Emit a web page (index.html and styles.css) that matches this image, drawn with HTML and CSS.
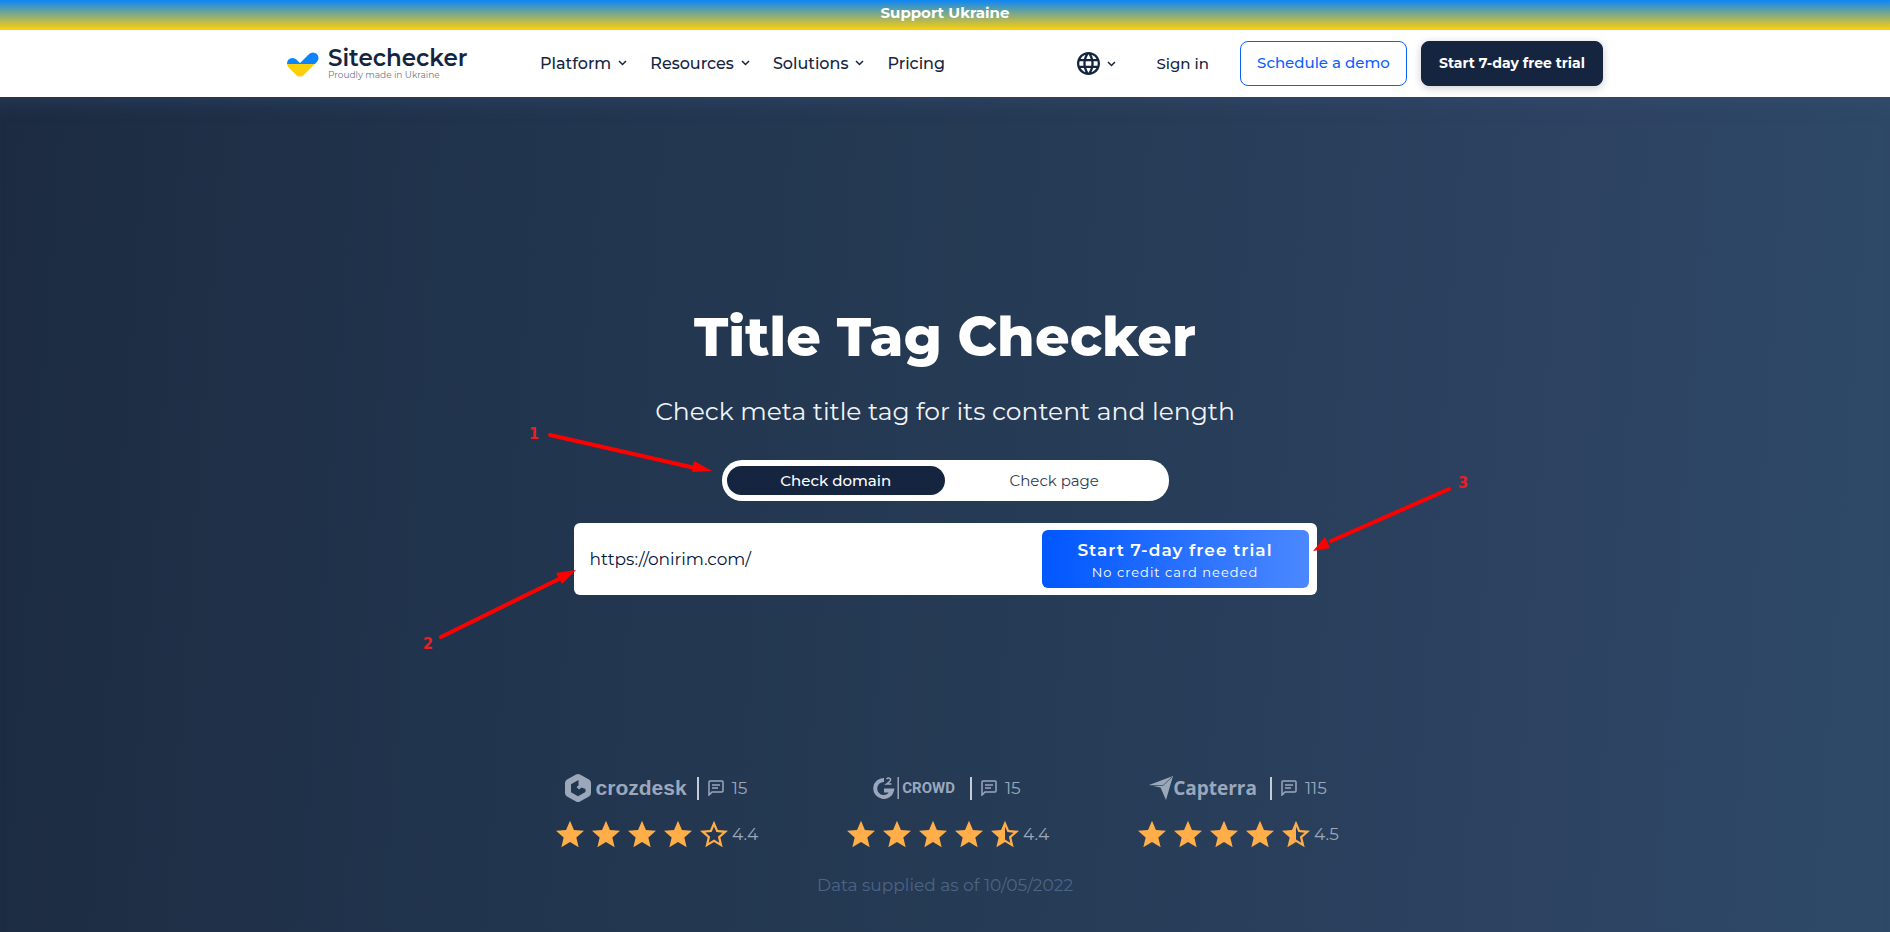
FILE: index.html
```html
<!DOCTYPE html>
<html lang="en">

<head>
	<meta charset="utf-8">
	<title>Title Tag Checker</title>
	<link rel="stylesheet" href="styles.css">
</head>

<body>
	<svg class="sprite" aria-hidden="true">
		<symbol id="chevron" viewBox="0 0 9 6">
			<path d="M1 1l3.5 3.5L8 1" fill="none" stroke="currentColor" stroke-width="1.5" />
		</symbol>
		<symbol id="star" viewBox="2 2 20 19">
			<path d="M12 17.27L18.18 21l-1.64-7.03L22 9.24l-7.19-.61L12 2 9.19 8.63 2 9.24l5.46 4.73L5.82 21z" />
		</symbol>
		<symbol id="star-empty" viewBox="2 2 20 19">
			<path d="M22 9.24l-7.19-.62L12 2 9.19 8.63 2 9.24l5.46 4.73L5.82 21 12 17.27 18.18 21l-1.63-7.03L22 9.24zM12 15.4l-3.76 2.27 1-4.28-3.32-2.88 4.38-.38L12 6.1l1.71 4.04 4.38.38-3.32 2.88 1 4.28L12 15.4z" />
		</symbol>
		<symbol id="star-half" viewBox="2 2 20 19">
			<path d="M22 9.24l-7.19-.62L12 2 9.19 8.63 2 9.24l5.46 4.73L5.82 21 12 17.27 18.18 21l-1.63-7.03L22 9.24zM12 15.4V6.1l1.71 4.04 4.38.38-3.32 2.88 1 4.28L12 15.4z" />
		</symbol>
		<symbol id="comment" viewBox="0 0 16 16">
			<path d="M1 15V2q0-1 1-1h12q1 0 1 1v9q0 1-1 1H4zM4 5h8M4 8h6" fill="none" stroke="currentColor" stroke-width="1.5" />
		</symbol>
	</svg>

	<div class="support">Support Ukraine</div>

	<header class="header">
		<div class="container">
			<a class="logo" href="#">
				<svg class="logoIcon" viewBox="0 0 32 26">
					<linearGradient id="flag" gradientUnits="userSpaceOnUse" x1="0" y1="0" x2="0" y2="24">
						<stop offset=".5" stop-color="#0b84ff" />
						<stop offset=".5" stop-color="#fbd00a" />
					</linearGradient>
					<path fill="none" stroke="url(#flag)" stroke-width="11" stroke-linecap="round" stroke-linejoin="round" d="M5.500 11.500l7.500 7.500L26 6" />
				</svg>
				<span class="logoText">
					<b>Sitechecker</b>
					<small>Proudly made in Ukraine</small>
				</span>
			</a>
			<nav class="menu">
				<a href="#">Platform <svg class="chevron"><use href="#chevron" /></svg></a>
				<a href="#">Resources <svg class="chevron"><use href="#chevron" /></svg></a>
				<a href="#">Solutions <svg class="chevron"><use href="#chevron" /></svg></a>
				<a href="#">Pricing</a>
			</nav>
			<div class="actions">
				<button class="language" aria-label="Language">
					<svg class="globe" viewBox="2 2 20 20">
						<path fill="currentColor" d="M11.990 2C6.470 2 2 6.480 2 12s4.470 10 9.990 10C17.520 22 22 17.520 22 12S17.520 2 11.990 2zm6.930 6h-2.950c-.32-1.250-.78-2.450-1.380-3.560 1.840.63 3.370 1.910 4.330 3.560zM12 4.040c.83 1.200 1.480 2.530 1.910 3.960h-3.820c.43-1.430 1.080-2.760 1.910-3.960zM4.260 14C4.100 13.360 4 12.690 4 12s.1-1.360.26-2h3.380c-.08.66-.14 1.320-.14 2 0 .68.06 1.340.14 2H4.260zm.82 2h2.950c.32 1.250.78 2.450 1.380 3.560-1.840-.63-3.370-1.900-4.330-3.560zm2.950-8H5.080c.96-1.660 2.490-2.930 4.330-3.560C8.810 5.550 8.350 6.750 8.030 8zM12 19.960c-.83-1.200-1.480-2.530-1.910-3.960h3.820c-.43 1.430-1.080 2.760-1.910 3.960zM14.340 14H9.660c-.09-.66-.16-1.320-.16-2 0-.68.07-1.350.16-2h4.680c.09.65.16 1.320.16 2 0 .68-.07 1.340-.16 2zm.25 5.560c.6-1.110 1.060-2.310 1.380-3.560h2.950c-.96 1.650-2.490 2.930-4.330 3.560zM16.360 14c.08-.66.14-1.320.14-2 0-.68-.06-1.340-.14-2h3.380c.16.64.26 1.310.26 2s-.1 1.360-.26 2h-3.380z" />
					</svg>
					<svg class="chevron"><use href="#chevron" /></svg>
				</button>
				<a class="signIn" href="#">Sign in</a>
				<a class="button outline" href="#">Schedule a demo</a>
				<a class="button dark" href="#">Start 7-day free trial</a>
			</div>
		</div>
	</header>

	<main class="hero">
		<h1>Title Tag Checker</h1>
		<p class="subtitle">Check meta title tag for its content and length</p>

		<div class="switch">
			<button class="active">Check domain</button>
			<button>Check page</button>
		</div>

		<form class="checkForm">
			<input type="text" aria-label="Website address" value="https://onirim.com/">
			<button type="button">
				<b>Start 7-day free trial</b>
				<span>No credit card needed</span>
			</button>
		</form>

		<div class="ratings">
			<div class="rating">
				<div class="source">
					<span class="brand crozdesk">
						<svg viewBox="0 0 26 28">
							<path fill="currentColor" fill-rule="evenodd" d="M11 .5q2-1 4 0l9 5q2 1 2 3.500v10q0 2.500-2 3.500l-9 5q-2 1-4 0l-9-5q-2-1-2-3.500V9q0-2.500 2-3.500zM13.500 6L6 10.200v8l7 4 7.500-4.200v-3l-4-1.500-2.500 2-2.500-2.500 2-1.500z" />
						</svg>
						crozdesk
					</span>
					<span class="reviews"><svg><use href="#comment" /></svg>15</span>
				</div>
				<div class="stars">
					<svg><use href="#star" /></svg>
					<svg><use href="#star" /></svg>
					<svg><use href="#star" /></svg>
					<svg><use href="#star" /></svg>
					<svg><use href="#star-empty" /></svg>
					<span>4.4</span>
				</div>
			</div>
			<div class="rating">
				<div class="source">
					<span class="brand crowd">
						<svg viewBox="0 0 26 22">
							<path fill="none" stroke="currentColor" stroke-width="4" d="M11 3a8.500 8.500 0 1 0 8 10.500h-8" />
							<path fill="none" stroke="currentColor" stroke-width="1.500" d="M13.500 2q2-2 4 0 .5 2-4 5h5M25.200 0v22" />
						</svg>
						CROWD
					</span>
					<span class="reviews"><svg><use href="#comment" /></svg>15</span>
				</div>
				<div class="stars">
					<svg><use href="#star" /></svg>
					<svg><use href="#star" /></svg>
					<svg><use href="#star" /></svg>
					<svg><use href="#star" /></svg>
					<svg><use href="#star-half" /></svg>
					<span>4.4</span>
				</div>
			</div>
			<div class="rating">
				<div class="source">
					<span class="brand capterra">
						<svg viewBox="0 0 24 24">
							<path fill="currentColor" d="M0 9L24 0l-7 24-5.500-12.500z" />
							<path stroke="#2a3e5a" stroke-width=".7" d="M2 9.500h12L23 1" fill="none" />
						</svg>
						Capterra
					</span>
					<span class="reviews"><svg><use href="#comment" /></svg>115</span>
				</div>
				<div class="stars">
					<svg><use href="#star" /></svg>
					<svg><use href="#star" /></svg>
					<svg><use href="#star" /></svg>
					<svg><use href="#star" /></svg>
					<svg><use href="#star-half" /></svg>
					<span>4.5</span>
				</div>
			</div>
		</div>
		<p class="supplied">Data supplied as of 10/05/2022</p>

		<!-- numbered hints, placed from the middle of the page -->
		<svg class="hints" viewBox="0 0 1100 300">
			<g stroke="#f00" stroke-width="4" stroke-linecap="round">
				<path d="M155 55l145 33" />
				<path d="M46 257l118-58" />
				<path d="M1054 109l-118 52" />
			</g>
			<g fill="#f00">
				<path d="M317 91l-18-10-2 11z" />
				<path d="M181 190l-20 3 6 11z" />
				<path d="M918 171l12-14 5 11z" />
			</g>
			<g class="hintNumber">
				<text x="134" y="59">1</text>
				<text x="28" y="269">2</text>
				<text x="1063" y="108">3</text>
			</g>
		</svg>
	</main>
</body>

</html>
```
FILE: styles.css
```css
* {
	box-sizing: border-box;
}

body {
	margin: 0;
	min-height: 100vh;
	display: flex;
	flex-direction: column;
	font-family: Montserrat, Inter, sans-serif;
	color: #15253f;
}

a {
	color: inherit;
	text-decoration: none;
}

button {
	font-family: inherit;
	border: none;
	cursor: pointer;
}

.sprite {
	display: none;
}

.support {
	height: 30px;
	line-height: 26px;
	text-align: center;
	font-size: 15px;
	font-weight: 700;
	color: #fff;
	background: linear-gradient(#0c86f5, #ffd00a);
}

.header {
	height: 67px;
	background: #fff;
}

.container {
	max-width: 1316px;
	height: 100%;
	margin: 0 auto;
	display: flex;
	align-items: center;
}

.logo {
	display: flex;
	gap: 9px;
	width: 253px;
}

.logoIcon {
	width: 32px;
	height: 26px;
	margin-top: 5px;
}

.logoText b {
	display: block;
	font-size: 23px;
	line-height: 22px;
	font-weight: 600;
}

.logoText small {
	display: block;
	font-size: 9px;
	line-height: 12px;
	color: #6b788b;
}

.menu {
	display: flex;
	gap: 23px;
	padding-bottom: 1px;
	font-size: 16px;
	font-weight: 500;
}

.menu a {
	display: flex;
	align-items: center;
	gap: 7px;
}

.chevron {
	width: 9px;
	height: 6px;
}

.actions {
	display: flex;
	align-items: center;
	margin-left: auto;
	font-size: 15px;
	font-weight: 500;
}

.language {
	display: flex;
	align-items: center;
	gap: 7px;
	padding: 0;
	color: inherit;
	background: none;
}

.globe {
	width: 23px;
	height: 23px;
}

.signIn {
	margin: 0 31px 0 40px;
}

.button {
	height: 45px;
	line-height: 42px;
	border: 1px solid #15253f;
	border-radius: 8px;
	text-align: center;
}

.outline {
	width: 167px;
	margin-right: 14px;
	border-color: #0b5fff;
	color: #0b5fff;
}

.dark {
	width: 182px;
	background: #15253f;
	color: #fff;
	font-size: 14px;
	font-weight: 700;
	box-shadow: 0 2px 8px rgba(0, 0, 0, 0.2);
}

.hero {
	flex: 1;
	position: relative;
	overflow: hidden;
	display: flex;
	flex-direction: column;
	align-items: center;
	padding-top: 200px;
	background: linear-gradient(94deg, #1c2b41, #21344d 25%, #263b55 55%, #2d4261 80%, #2e4968);
	box-shadow: inset 0 20px 20px -16px rgba(60, 85, 125, 0.4);
}

h1 {
	margin: 0;
	font-size: 54px;
	line-height: 80px;
	font-weight: 800;
	color: #fff;
}

.subtitle {
	margin: 17px 0 31px;
	font-size: 25px;
	line-height: 35px;
	color: #f0f3f7;
}

.switch {
	display: flex;
	width: 447px;
	height: 41px;
	padding: 6px 5px;
	border-radius: 20px;
	background: #fff;
}

.switch button {
	flex: 1;
	border-radius: 15px;
	background: none;
	font-size: 15px;
	color: #2c3c54;
}

.switch .active {
	background: #15253f;
	color: #fff;
	font-weight: 500;
}

.checkForm {
	display: flex;
	width: 743px;
	height: 72px;
	margin-top: 22px;
	padding: 7px 8px 7px 16px;
	border-radius: 6px;
	background: #fff;
}

.checkForm input {
	flex: 1;
	min-width: 0;
	padding: 0;
	border: none;
	outline: none;
	font-family: inherit;
	font-size: 17px;
	color: #001440;
}

.checkForm button {
	width: 267px;
	padding: 2px 0 0;
	border-radius: 6px;
	background: linear-gradient(90deg, #0057ff, #4b88ff);
	color: #fff;
	letter-spacing: 1px;
}

.checkForm b {
	display: block;
	font-size: 17px;
	line-height: 24px;
	font-weight: 600;
}

.checkForm span {
	display: block;
	font-size: 13px;
	line-height: 20px;
}

.ratings {
	display: flex;
	gap: 83px;
	margin-top: 179px;
	color: #9ba8bc;
}

.rating {
	width: 208px;
	padding-left: 4px;
}

.source {
	display: flex;
	justify-content: center;
	align-items: center;
	height: 28px;
}

.brand {
	display: flex;
	align-items: center;
	padding-right: 10px;
}

.crozdesk {
	gap: 5px;
	font: 700 21px "Liberation Sans", sans-serif;
}

.crozdesk svg {
	width: 26px;
	height: 28px;
}

.crowd {
	gap: 3px;
	padding-right: 15px;
	font: 700 15px Roboto, sans-serif;
}

.crowd svg {
	width: 26px;
	height: 22px;
}

.capterra {
	padding-right: 13px;
	font: 700 19px "Open Sans", sans-serif;
}

.capterra svg {
	width: 24px;
	height: 24px;
}

.reviews {
	display: flex;
	align-items: center;
	gap: 8px;
	height: 23px;
	padding-left: 9px;
	border-left: 2px solid #c5ccd7;
	font-size: 17px;
}

.reviews svg {
	width: 16px;
	height: 16px;
}

.stars {
	display: flex;
	align-items: center;
	gap: 8px;
	height: 28px;
	margin-top: 18px;
	padding-left: 2px;
	font-size: 17px;
}

.stars svg {
	flex: none;
	width: 28px;
	height: 28px;
	fill: #ffae4a;
}

.stars span {
	margin-left: -4px;
}

.supplied {
	margin: 25px 0 0;
	font-size: 17px;
	line-height: 24px;
	color: #4c6486;
}

.hints {
	position: absolute;
	top: 283px;
	left: 50%;
	width: 1100px;
	height: 300px;
	margin-left: -550px;
	pointer-events: none;
}

.hintNumber {
	font: 700 16px "DejaVu Sans Condensed", "DejaVu Sans", sans-serif;
	fill: #ee1c25;
}
```
